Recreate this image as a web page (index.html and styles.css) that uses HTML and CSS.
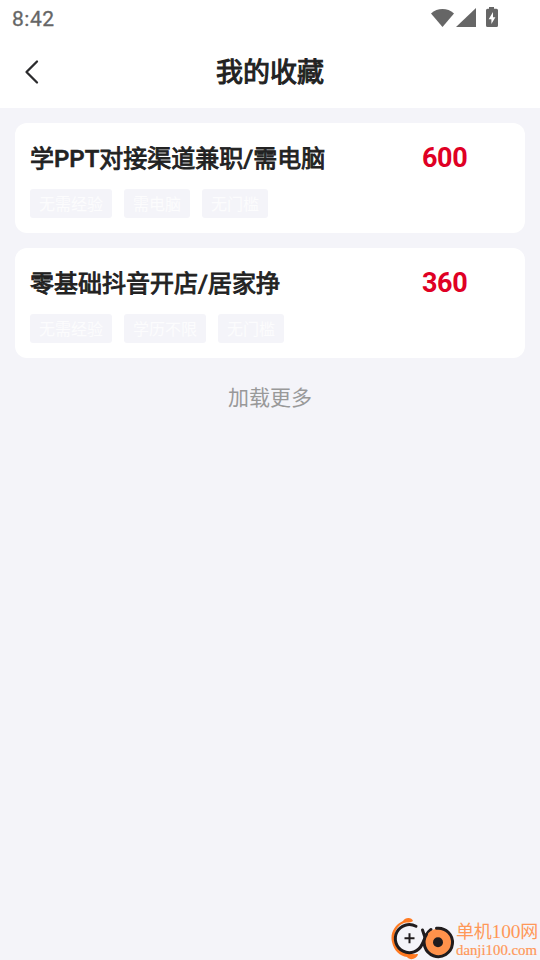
FILE: index.html
```html
<!DOCTYPE html>
<html lang="zh-CN">
<head>
<meta charset="utf-8">
<title>我的收藏</title>
<link rel="stylesheet" href="styles.css">
</head>
<body>
<header class="top">
  <div class="status">
    <span class="clock">8:42</span>
    <svg class="status-icons" width="68" height="22" viewBox="0 0 68 22" fill="#666">
      <path d="M0 6.500C6.500 0.600 16.500 0.600 23 6.500L11.500 20Z"/>
      <path d="M45 1V20H25Z"/>
      <path fill-rule="evenodd" d="M58 0h5v1.700h2.500q1.500 0 1.500 1.500V18.500q0 1.500-1.500 1.500h-9q-1.500 0-1.500-1.500V3.200q0-1.500 1.500-1.500h1.500zM62 5L57.700 12.200h2.700V17l4-6.800h-2.400z"/>
    </svg>
  </div>
  <nav class="nav">
    <svg class="back" width="16" height="26" viewBox="0 0 16 26" fill="none" stroke="#2b2b2d" stroke-width="2.300" stroke-linecap="round" stroke-linejoin="round"><path d="M13 2.500L2.500 13L13 23.500"/></svg>
    <h1>我的收藏</h1>
  </nav>
</header>
<main class="list">
  <article class="card">
    <div class="row"><h2>学<span class="latin">PPT</span>对接渠道兼职/需电脑</h2><span class="price">600</span></div>
    <div class="tags"><span>无需经验</span><span>需电脑</span><span>无门槛</span></div>
  </article>
  <article class="card">
    <div class="row"><h2>零基础抖音开店/居家挣</h2><span class="price">360</span></div>
    <div class="tags"><span>无需经验</span><span>学历不限</span><span>无门槛</span></div>
  </article>
  <div class="more">加载更多</div>
</main>
<aside class="mark">
  <svg width="66" height="44" viewBox="0 0 66 44" fill="none">
    <path d="M23 5C22 1 15 1 13 5C4 9 0 18 2 26C4 35 10 40 17 41C20 45 27 43 28 38C19 39 11 35 7 28C2 19 6 10 14 7C17 6 21 7 23 5Z" fill="#ff7a22"/>
    <path d="M26 10.300A14 14 0 1 0 32 28.500Q35 22 36.500 18.500Q38.500 15.500 41 13.500" stroke="#201c1e" stroke-width="3" stroke-linecap="round"/>
    <path d="M32.500 14L34.500 20" stroke="#201c1e" stroke-width="3" stroke-linecap="round"/>
    <circle cx="48.300" cy="26.300" r="13.500" fill="#ff924b"/>
    <path d="M46.500 12.300A14.200 14.200 0 1 1 36.500 18.500" stroke="#201c1e" stroke-width="3" stroke-linecap="round"/>
    <circle cx="48" cy="26.300" r="5" fill="#201c1e"/>
    <path d="M14.500 22.300h10M19.500 17.300v10" stroke="#201c1e" stroke-width="2"/>
  </svg>
  <div class="mark-text"><div class="mark-name">单机<span class="digits">100</span>网</div><div class="mark-url">danji100.com</div></div>
</aside>
</body>
</html>
```
FILE: styles.css
```css
* { box-sizing: border-box; }
body {
  margin: 0;
  height: 960px;
  overflow: hidden;
  background: #f4f4f9;
  color: #222;
  font-family: Roboto, "Noto Sans CJK SC", sans-serif;
}
h1, h2 { margin: 0; }
.top { height: 108px; background: #fff; }
.status {
  display: flex;
  justify-content: space-between;
  height: 36px;
  padding: 7px 41px 0 12px;
  color: #666;
}
.clock { font-size: 21px; font-weight: 400; line-height: 24px; letter-spacing: 0.5px; -webkit-text-stroke: 0.3px #666; }
.status-icons { display: block; }
.nav {
  display: grid;
  grid-template-columns: 100px 1fr 100px;
  align-items: center;
  height: 72px;
}
.back { margin-left: 24px; }
h1 { padding-top: 2px; text-align: center; font-size: 27px; line-height: 40px; font-weight: 400; -webkit-text-stroke: 1px #222; }
.list { display: flex; flex-direction: column; gap: 15px; padding: 15px; }
.card { height: 110px; padding: 15px; border-radius: 12px; background: #fff; }
.row { display: grid; grid-template-columns: 392px auto; height: 40px; align-items: start; }
h2 { font-size: 24px; line-height: 42px; font-weight: 400; white-space: nowrap; -webkit-text-stroke: 0.9px #222; }
.latin { font-weight: 500; -webkit-text-stroke-width: 0.6px; }
.price { font-size: 27px; line-height: 40px; font-weight: 700; letter-spacing: -0.4px; color: #df0024; }
.tags { display: flex; gap: 12px; margin-top: 11px; }
.tags span {
  height: 29px;
  padding: 1px 9px 0;
  border-radius: 3px;
  background: #f4f4f9;
  color: #fcfcfd;
  font-size: 16px;
  line-height: 29px;
}
.more { text-align: center; color: #999; font-size: 21px; line-height: 30px; margin-top: 10px; }
.mark {
  position: absolute;
  left: 390px;
  top: 916px;
  display: flex;
  width: 150px;
  height: 44px;
  color: #ff9858;
  font-family: "Noto Sans CJK SC", sans-serif;
  white-space: nowrap;
}
.mark svg { flex: none; }
.mark-name { font-size: 18px; line-height: 29px; letter-spacing: -0.2px; }
.digits { font-family: "Liberation Serif", serif; font-size: 19.500px; }
.mark-url { font-family: "Liberation Serif", serif; font-size: 14.800px; line-height: 8px; -webkit-text-stroke: 0.2px #ff9858; }
```
